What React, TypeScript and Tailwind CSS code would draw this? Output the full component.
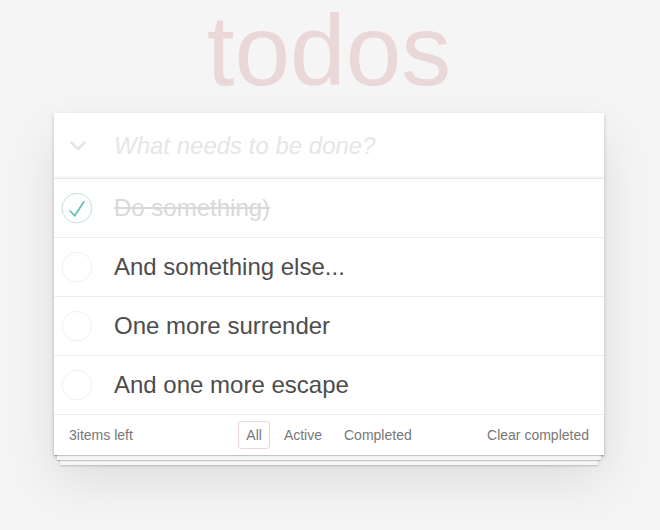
import React from "react";

interface Todo {
  id: number;
  title: string;
  completed: boolean;
}

const todos: Todo[] = [
  { id: 1, title: "Do something)", completed: true },
  { id: 2, title: "And something else...", completed: false },
  { id: 3, title: "One more surrender", completed: false },
  { id: 4, title: "And one more escape", completed: false },
];

const Toggle = ({ checked }: { checked: boolean }) => (
  <svg width="40" height="40" viewBox="-10 -18 100 135" className="shrink-0">
    <circle cx="50" cy="50" r="50" fill="none" stroke={checked ? "#bddad5" : "#ededed"} strokeWidth="3" />
    {checked && <path fill="#5dc2af" d="M72 25L42 71 27 56l-4 4 20 20 34-52z" />}
  </svg>
);

export default function App() {
  const left = todos.filter((t) => !t.completed).length;

  return (
    <div className="min-h-screen bg-[#f5f5f5] font-['Liberation_Sans',Arial,sans-serif] text-[14px] leading-[1.4em] text-[#4d4d4d]">
      <div className="w-[550px] ml-[54px]">
        {/* Title */}
        <h1 className="h-[100px] text-[100px] leading-none font-thin text-center text-[rgba(175,47,47,0.15)]">
          todos
        </h1>

        {/* Card */}
        <section className="mt-[13px] bg-white shadow-[0_2px_4px_0_rgba(0,0,0,0.2),0_25px_50px_0_rgba(0,0,0,0.1)]">
          <header className="flex items-center h-[65px] shadow-[inset_0_-2px_1px_rgba(0,0,0,0.03)]">
            <div className="w-[60px] pl-4 flex items-center">
              <svg width="16" height="10" viewBox="0 0 16 10" fill="none">
                <path d="M1.5 1.5L8 8l6.5-6.5" stroke="#e6e6e6" strokeWidth="2.6" strokeLinecap="round" strokeLinejoin="round" />
              </svg>
            </div>
            <input
              className="flex-1 pr-4 bg-transparent outline-none text-[24px] leading-[1.4em] font-['Liberation_Sans',Arial,sans-serif] text-[#4d4d4d] placeholder:italic placeholder:font-light placeholder:text-[#e6e6e6]"
              placeholder="What needs to be done?"
            />
          </header>

          <ul className="border-t border-[#e6e6e6]">
            {todos.map((t) => (
              <li key={t.id} className="flex items-center h-[59px] border-b border-[#ededed]">
                <div className="w-[60px] flex items-center">
                  <Toggle checked={t.completed} />
                </div>
                <label
                  className={
                    "text-[24px] leading-[1.2] " +
                    (t.completed ? "text-[#d9d9d9] line-through" : "text-[#4d4d4d]")
                  }
                >
                  {t.title}
                </label>
              </li>
            ))}
          </ul>

          <footer className="flex items-center h-[40px] px-[15px] text-[#777] shadow-[0_1px_1px_rgba(0,0,0,0.2),0_8px_0_-3px_#f6f6f6,0_9px_1px_-3px_rgba(0,0,0,0.2),0_16px_0_-6px_#f6f6f6,0_17px_2px_-6px_rgba(0,0,0,0.2)]">
            <span className="flex-1 leading-5">{left}items left</span>
            <ul className="flex">
              <li>
                <a className="block m-[3px] px-[7px] py-[3px] leading-5 border border-[rgba(175,47,47,0.2)] rounded-[3px]">All</a>
              </li>
              <li>
                <a className="block m-[3px] px-[7px] py-[3px] leading-5 border border-transparent rounded-[3px]">Active</a>
              </li>
              <li>
                <a className="block m-[3px] px-[7px] py-[3px] leading-5 border border-transparent rounded-[3px]">Completed</a>
              </li>
            </ul>
            <span className="flex-1 text-right leading-5">Clear completed</span>
          </footer>
        </section>
      </div>
    </div>
  );
}
